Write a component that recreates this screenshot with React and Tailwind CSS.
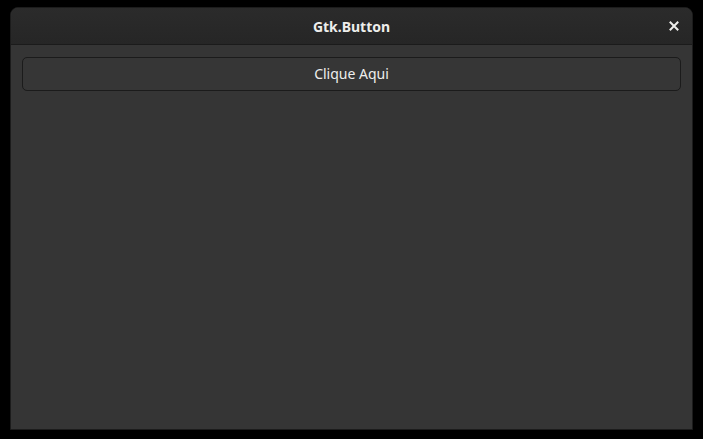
import React from 'react'

export default function App() {
    return (
        <div className="w-[703px] h-[439px] bg-black pt-[7px] pl-[10px]" style={{ fontFamily: '"Noto Sans", "Open Sans", sans-serif' }}>
            <div className="w-[683px] h-[423px] rounded-t-[8px] border border-[#1c1c1c] bg-[#353535] flex flex-col overflow-hidden">
                <div className="h-[37px] shrink-0 flex items-center justify-center relative bg-gradient-to-b from-[#2b2b2b] to-[#262626] border-b border-[#1b1b1b]">
                    <span className="text-[14px] font-bold text-[#eeeeec]">Gtk.Button</span>
                    <button aria-label="Close" className="absolute right-[10px] top-[10px] w-[16px] h-[16px] flex items-center justify-center">
                        <svg width="10" height="10" viewBox="0 0 10 10">
                            <path d="M1.5 1.5 L8.5 8.5 M8.5 1.5 L1.5 8.5" stroke="#eeeeec" strokeWidth="2" strokeLinecap="square" />
                        </svg>
                    </button>
                </div>
                <div className="flex-1 px-[11px] pt-[12px]">
                    <button className="w-full h-[34px] rounded-[5px] border border-[#1b1b1b] bg-[#363636] text-[14px] text-[#eeeeec] flex items-center justify-center pb-[2px]">
                        Clique Aqui
                    </button>
                </div>
            </div>
        </div>
    )
}
